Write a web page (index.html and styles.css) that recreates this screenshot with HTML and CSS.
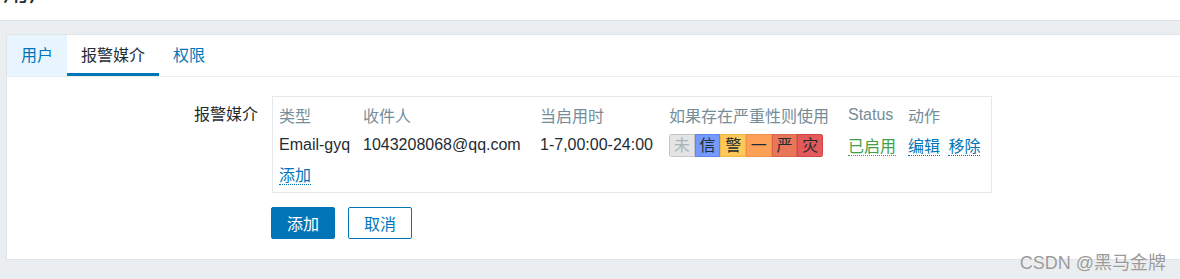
FILE: index.html
```html
<!DOCTYPE html>
<html lang="zh-CN">

<head>
    <meta charset="UTF-8">
    <meta name="viewport" content="width=device-width, initial-scale=1.0">
    <title>用户</title>
    <link rel="stylesheet" href="styles.css">
</head>

<body>
    <header class="page-header">
        <h1>用户</h1>
    </header>

    <main class="wrapper">
        <div class="card">
            <ul class="tabs">
                <li class="tab tab-hover">用户</li>
                <li class="tab tab-active">报警媒介</li>
                <li class="tab">权限</li>
            </ul>

            <form class="form" action="#" method="post">
                <div class="form-row">
                    <label class="form-label">报警媒介</label>
                    <div class="media-box">
                        <table class="media-table">
                            <thead>
                                <tr>
                                    <th class="c-type">类型</th>
                                    <th class="c-to">收件人</th>
                                    <th class="c-when">当启用时</th>
                                    <th class="c-sev">如果存在严重性则使用</th>
                                    <th class="c-status">Status</th>
                                    <th>动作</th>
                                </tr>
                            </thead>
                            <tbody>
                                <tr class="row-media">
                                    <td>Email-gyq</td>
                                    <td>1043208068@qq.com</td>
                                    <td>1-7,00:00-24:00</td>
                                    <td>
                                        <div class="severity">
                                            <span class="sev sev-na">未</span>
                                            <span class="sev sev-info">信</span>
                                            <span class="sev sev-warn">警</span>
                                            <span class="sev sev-avg">一</span>
                                            <span class="sev sev-high">严</span>
                                            <span class="sev sev-disaster">灾</span>
                                        </div>
                                    </td>
                                    <td><a class="link link-green" href="#">已启用</a></td>
                                    <td>
                                        <a class="link" href="#">编辑</a>
                                        <a class="link" href="#">移除</a>
                                    </td>
                                </tr>
                                <tr class="row-add">
                                    <td colspan="6"><a class="link" href="#">添加</a></td>
                                </tr>
                            </tbody>
                        </table>
                    </div>
                </div>

                <div class="form-actions">
                    <button type="submit" class="btn btn-primary">添加</button>
                    <button type="button" class="btn btn-alt">取消</button>
                </div>
            </form>
        </div>
    </main>

    <div class="watermark">CSDN @黑马金牌</div>
</body>

</html>
```

FILE: styles.css
```css
body {
    margin: 0;
    font-family: "Liberation Sans", Arial, "Noto Sans CJK SC", sans-serif;
    font-size: 16px;
    color: #1f2c33;
    background-color: #ebeef0;
    overflow: hidden;
}

.page-header {
    height: 20px;
    background-color: #fff;
    border-bottom: 1px solid #dce1e4;
    overflow: hidden;
}

.page-header h1 {
    margin: -24px 0 0 3px;
    font-size: 26px;
    font-weight: normal;
    line-height: 32px;
}

.wrapper {
    padding: 13px 0 0 6px;
}

.card {
    height: 224px;
    margin-right: -20px;
    background-color: #fff;
    border: 1px solid #dfe4e7;
}

.tabs {
    display: flex;
    margin: 0;
    padding: 0;
    list-style: none;
    border-bottom: 1px solid #ebeef0;
}

.tab {
    height: 41px;
    line-height: 42px;
    padding: 0 14px;
    color: #0275b8;
    box-sizing: border-box;
}

.tab-hover {
    background-color: #e8f5ff;
}

.tab-active {
    color: #1f2c33;
    border-bottom: 3px solid #0275b8;
}

.form {
    padding-top: 19px;
}

.form-row {
    display: flex;
    align-items: flex-start;
}

.form-label {
    width: 251px;
    text-align: right;
    padding-top: 5px;
    margin-right: 14px;
}

.media-box {
    width: 706px;
    padding: 4px 6px 4px 6px;
    border: 1px solid #e6e9eb;
}

.media-table {
    border-collapse: collapse;
}

.media-table th,
.media-table td {
    height: 29px;
    padding: 0;
    text-align: left;
    white-space: nowrap;
}

.media-table th {
    height: 28px;
    font-weight: normal;
    color: #768d99;
}

.media-table .row-media td {
    height: 30px;
    padding-top: 1px;
}

.media-table .row-add td {
    height: 28px;
}

.c-type { width: 84px; }
.c-to { width: 177px; }
.c-when { width: 129px; }
.c-sev { width: 179px; }
.c-status { width: 60px; }

.severity {
    display: flex;
    width: 154px;
    height: 23px;
    border-radius: 3px;
    overflow: hidden;
}

.sev {
    flex: 1;
    text-align: center;
    line-height: 21px;
    border: 1px solid;
}

.sev-na { background-color: #e4e4e4; border-color: #c6c6c6; color: #a9b5bb; }
.sev-info { background-color: #7499ff; border-color: #5f86ee; }
.sev-warn { background-color: #ffc859; border-color: #eeb646; }
.sev-avg { background-color: #ffa059; border-color: #ef9049; }
.sev-high { background-color: #e97659; border-color: #d86549; }
.sev-disaster { background-color: #e45959; border-color: #cf4848; }

.link {
    color: #0275b8;
    text-decoration: none;
    border-bottom: 1px dotted #0275b8;
}

.link + .link {
    margin-left: 4px;
}

.link-green {
    color: #429e47;
    border-bottom-color: #429e47;
}

.form-actions {
    display: flex;
    gap: 13px;
    margin: 14px 0 0 264px;
}

.btn {
    height: 32px;
    padding: 0 15px;
    font-family: inherit;
    font-size: 16px;
    border-radius: 2px;
    cursor: pointer;
}

.btn-primary {
    background-color: #0275b8;
    color: #fff;
    border: 1px solid #0275b8;
}

.btn-alt {
    background-color: #fff;
    color: #0275b8;
    border: 1px solid #0275b8;
}

.watermark {
    position: absolute;
    right: 14px;
    top: 248px;
    font-size: 18px;
    color: #9a9a9a;
    text-shadow: 0 0 1px #fff;
}
```
